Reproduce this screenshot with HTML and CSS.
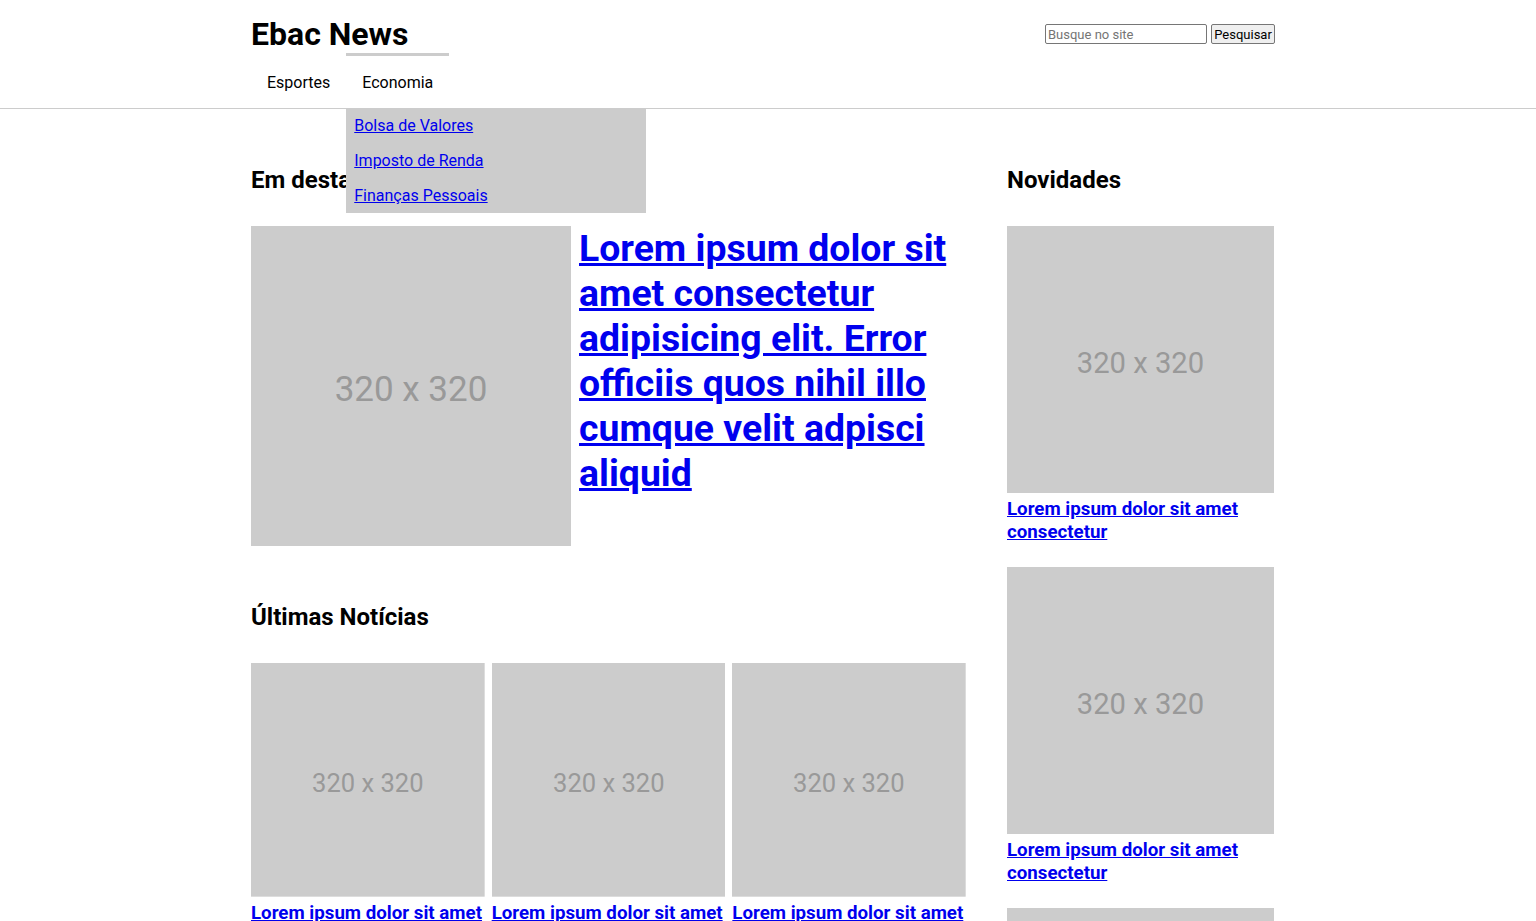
FILE: index.html
```html
<!DOCTYPE html>
<html lang="pt-BR">
<head>
<meta charset="utf-8">
<title>Ebac News</title>
<link rel="stylesheet" href="styles.css">
</head>
<body>
<header class="header">
  <div class="container header-inner">
    <div class="brand">
      <h1 class="logo">Ebac News</h1>
      <nav>
        <ul class="menu">
          <li class="menu-item"><a class="menu-link" href="#">Esportes</a></li>
          <li class="menu-item is-open"><a class="menu-link" href="#">Economia</a>
            <ul class="submenu">
              <li class="submenu-item"><a href="#">Bolsa de Valores</a></li>
              <li class="submenu-item"><a href="#">Imposto de Renda</a></li>
              <li class="submenu-item"><a href="#">Finanças Pessoais</a></li>
            </ul>
          </li>
        </ul>
      </nav>
    </div>
    <form class="search">
      <input class="search-input" type="text" placeholder="Busque no site">
      <button class="search-btn" type="button">Pesquisar</button>
    </form>
  </div>
</header>

<div class="container layout">
  <main class="main">
    <section class="featured">
      <h2 class="section-title">Em destaque</h2>
      <article class="featured-item">
        <svg class="ph ph-featured" viewBox="0 0 320 320"><rect width="320" height="320" fill="#cccccc"/><text x="160" y="163" text-anchor="middle" dominant-baseline="central" font-size="35" fill="#999999" font-family="Roboto, sans-serif">320 x 320</text></svg>
        <h2 class="featured-title"><a href="#">Lorem ipsum dolor sit amet consectetur adipisicing elit. Error officiis quos nihil illo cumque velit adpisci aliquid</a></h2>
      </article>
    </section>
    <section class="latest">
      <h2 class="section-title">Últimas Notícias</h2>
      <div class="cards">
        <article class="card">
          <svg class="ph" viewBox="0 0 320 320"><rect width="320" height="320" fill="#cccccc"/><text x="160" y="164" text-anchor="middle" dominant-baseline="central" font-size="35" fill="#999999" font-family="Roboto, sans-serif">320 x 320</text></svg>
          <h3 class="card-title"><a href="#">Lorem ipsum dolor sit amet consectetur</a></h3>
        </article>
        <article class="card">
          <svg class="ph" viewBox="0 0 320 320"><rect width="320" height="320" fill="#cccccc"/><text x="160" y="164" text-anchor="middle" dominant-baseline="central" font-size="35" fill="#999999" font-family="Roboto, sans-serif">320 x 320</text></svg>
          <h3 class="card-title"><a href="#">Lorem ipsum dolor sit amet consectetur</a></h3>
        </article>
        <article class="card">
          <svg class="ph" viewBox="0 0 320 320"><rect width="320" height="320" fill="#cccccc"/><text x="160" y="164" text-anchor="middle" dominant-baseline="central" font-size="35" fill="#999999" font-family="Roboto, sans-serif">320 x 320</text></svg>
          <h3 class="card-title"><a href="#">Lorem ipsum dolor sit amet consectetur</a></h3>
        </article>
      </div>
    </section>
  </main>
  <aside class="sidebar">
    <h2 class="section-title">Novidades</h2>
    <article class="side-item">
      <svg class="ph" viewBox="0 0 320 320"><rect width="320" height="320" fill="#cccccc"/><text x="160" y="164" text-anchor="middle" dominant-baseline="central" font-size="35" fill="#999999" font-family="Roboto, sans-serif">320 x 320</text></svg>
      <h3 class="card-title"><a href="#">Lorem ipsum dolor sit amet consectetur</a></h3>
    </article>
    <article class="side-item">
      <svg class="ph" viewBox="0 0 320 320"><rect width="320" height="320" fill="#cccccc"/><text x="160" y="164" text-anchor="middle" dominant-baseline="central" font-size="35" fill="#999999" font-family="Roboto, sans-serif">320 x 320</text></svg>
      <h3 class="card-title"><a href="#">Lorem ipsum dolor sit amet consectetur</a></h3>
    </article>
    <article class="side-item">
      <svg class="ph" viewBox="0 0 320 320"><rect width="320" height="320" fill="#cccccc"/><text x="160" y="164" text-anchor="middle" dominant-baseline="central" font-size="35" fill="#999999" font-family="Roboto, sans-serif">320 x 320</text></svg>
      <h3 class="card-title"><a href="#">Lorem ipsum dolor sit amet consectetur</a></h3>
    </article>
  </aside>
</div>
</body>
</html>
```

FILE: styles.css
```css
* {
  box-sizing: border-box;
}

body {
  margin: 0;
  font-family: Roboto, "Liberation Sans", sans-serif;
  color: #000;
  background: #fff;
}

a {
  color: #0000ee;
}

.container {
  width: 1024px;
  margin-left: calc(50% - 517px);
}

.header {
  border-bottom: 1px solid #cccccc;
}

.header-inner {
  display: flex;
  justify-content: space-between;
  align-items: flex-start;
}

.logo {
  margin: 15px 0 0;
  font-size: 32px;
  line-height: 38px;
  font-weight: 700;
}

.menu {
  list-style: none;
  margin: 0;
  padding: 0;
  display: flex;
}

.menu-item {
  position: relative;
  border-top: 3px solid transparent;
  padding: 17px 16px 16px;
  font-size: 16px;
  line-height: 19px;
}

.menu-item.is-open {
  border-top-color: #cccccc;
}

.menu-link {
  color: #000;
  text-decoration: none;
}

.submenu {
  position: absolute;
  left: 0;
  top: calc(100% + 1px);
  width: 300px;
  margin: 0;
  padding: 0;
  list-style: none;
  background: #cccccc;
  z-index: 10;
}

.submenu-item {
  padding: 6.5px 8px 9.5px;
  line-height: 19px;
  font-size: 16px;
}

.submenu-item:last-child {
  padding-bottom: 8.5px;
}

.search {
  margin-top: 24px;
  display: flex;
  gap: 4px;
}

.search-input {
  width: 162px;
  height: 20px;
  padding: 1px 2px;
  border: 1px solid #767676;
  border-radius: 2px;
  font-family: Roboto, sans-serif;
  font-size: 13px;
}

.search-input::placeholder {
  color: #757575;
}

.search-btn {
  width: 64px;
  height: 20px;
  padding: 0 1px;
  border: 1px solid #767676;
  border-radius: 2px;
  background: #efefef;
  font-family: Roboto, sans-serif;
  font-size: 13px;
  color: #000;
}

.layout {
  display: grid;
  grid-template-columns: 715px 267px;
  column-gap: 41px;
  padding-top: 57px;
}

.section-title {
  margin: 0 0 32px;
  font-size: 24px;
  line-height: 28px;
  font-weight: 700;
}

.featured-item {
  display: flex;
  gap: 8px;
  align-items: flex-start;
}

.ph {
  display: block;
  width: 100%;
  aspect-ratio: 1 / 1;
}

.ph-featured {
  width: 320px;
  height: 320px;
  flex-shrink: 0;
}

.featured-title {
  margin: 0;
  font-size: 37.4px;
  line-height: 45px;
  font-weight: 700;
}

.latest {
  margin-top: 57px;
}

.cards {
  display: grid;
  grid-template-columns: repeat(3, 1fr);
  gap: 7px;
}

.card-title {
  margin: 5px 0 0;
  font-size: 18.72px;
  line-height: 23px;
  font-weight: 700;
}

.side-item {
  margin-bottom: 23px;
}
```
